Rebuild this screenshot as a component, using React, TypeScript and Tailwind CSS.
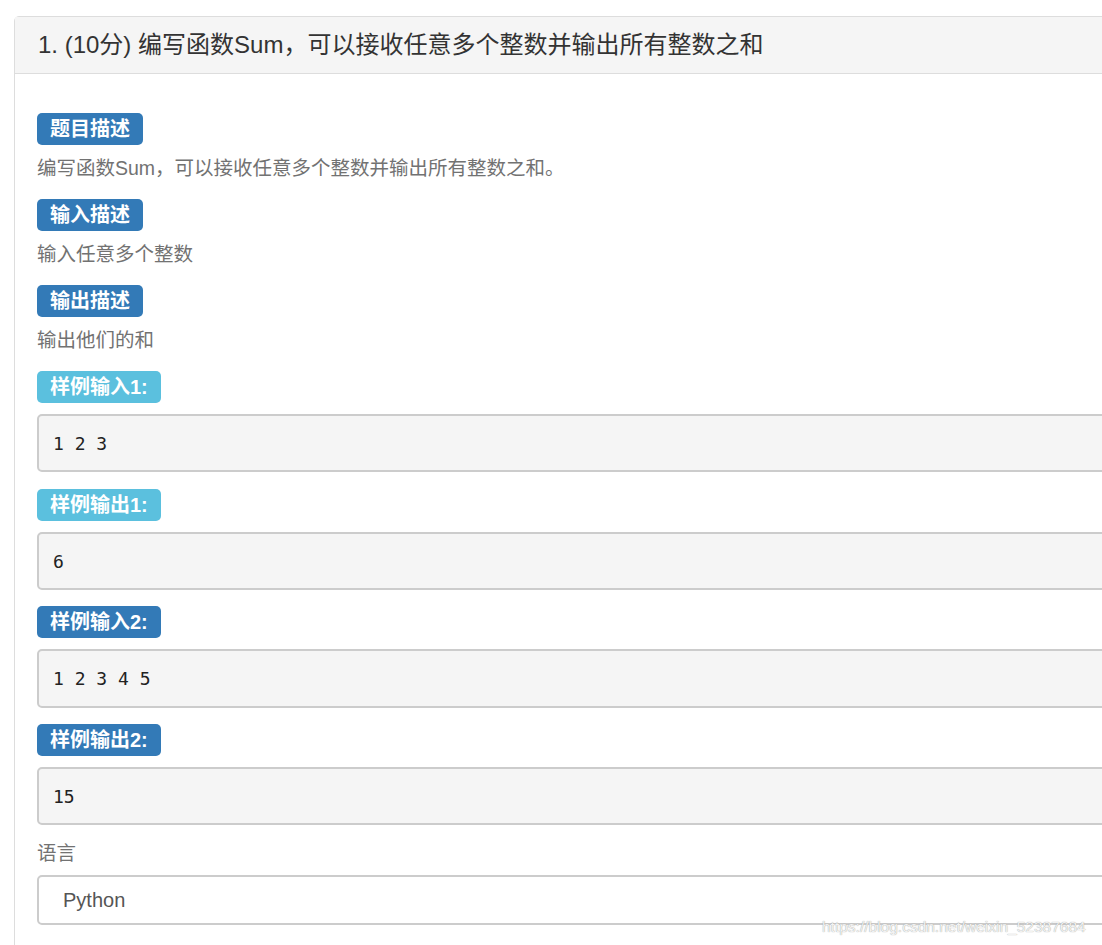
import React from "react";

const font = { fontFamily: '"Liberation Sans", Arial, "Noto Sans CJK SC", sans-serif' };

function Badge({ children, info }: { children: React.ReactNode; info?: boolean }) {
  return (
    <div className="flex">
      <span
        className={`h-[32px] flex items-center px-[13px] rounded-[5px] text-white font-bold text-[20px] leading-none ${
          info ? "bg-[#5bc0de]" : "bg-[#337ab7]"
        }`}
      >
        {children}
      </span>
    </div>
  );
}

function Pre({ children, h = "h-[58px]" }: { children: React.ReactNode; h?: string }) {
  return (
    <div
      className={`${h} flex items-center border-2 border-[#cccccc] rounded-[5px] bg-[#f5f5f5] pl-[14px] text-[18px] text-[#222]`}
      style={{ fontFamily: '"DejaVu Sans Mono", "Liberation Mono", monospace' }}
    >
      {children}
    </div>
  );
}

export default function App() {
  return (
    <div className="w-full h-[945px] overflow-hidden bg-white relative" style={font}>
      <div className="ml-[14px] mt-[16px] w-[1200px] border border-[#dddddd] rounded-[5px]">
        <div className="bg-[#f5f5f5] border-b border-[#dddddd] pl-[23px] py-[15px] text-[24px] leading-[26px] text-[#333]">
          1. (10分) 编写函数Sum，可以接收任意多个整数并输出所有整数之和
        </div>
        <div className="pl-[22px] pt-[39px] pb-[40px] flex flex-col">
          <Badge>题目描述</Badge>
          <div className="mt-[10px] h-[26px] leading-[26px] text-[19.5px] text-[#727272]">
            编写函数Sum，可以接收任意多个整数并输出所有整数之和。
          </div>
          <div className="mt-[18px]">
            <Badge>输入描述</Badge>
          </div>
          <div className="mt-[10px] h-[26px] leading-[26px] text-[19.5px] text-[#727272]">输入任意多个整数</div>
          <div className="mt-[18px]">
            <Badge>输出描述</Badge>
          </div>
          <div className="mt-[10px] h-[26px] leading-[26px] text-[19.5px] text-[#727272]">输出他们的和</div>
          <div className="mt-[18px]">
            <Badge info>样例输入1:</Badge>
          </div>
          <div className="mt-[11px]">
            <Pre>1 2 3</Pre>
          </div>
          <div className="mt-[17px]">
            <Badge info>样例输出1:</Badge>
          </div>
          <div className="mt-[11px]">
            <Pre>6</Pre>
          </div>
          <div className="mt-[16px]">
            <Badge>样例输入2:</Badge>
          </div>
          <div className="mt-[11px]">
            <Pre h="h-[59px]">1 2 3 4 5</Pre>
          </div>
          <div className="mt-[16px]">
            <Badge>样例输出2:</Badge>
          </div>
          <div className="mt-[11px]">
            <Pre>15</Pre>
          </div>
          <div className="mt-[15px] h-[26px] leading-[26px] text-[19.5px] text-[#727272]">语言</div>
          <div className="mt-[9px] h-[50px] flex items-center border-2 border-[#cccccc] rounded-[5px] bg-white pl-[24px] text-[20px] text-[#555]">
            Python
          </div>
        </div>
      </div>
      <div
        className="absolute left-[822px] top-[917px] text-[15.5px] leading-[20px] text-[#f2f2f2] whitespace-nowrap"
        style={{ textShadow: "0 0 1px #8a8a8a" }}
      >
        https://blog.csdn.net/weixin_52387684
      </div>
    </div>
  );
}
